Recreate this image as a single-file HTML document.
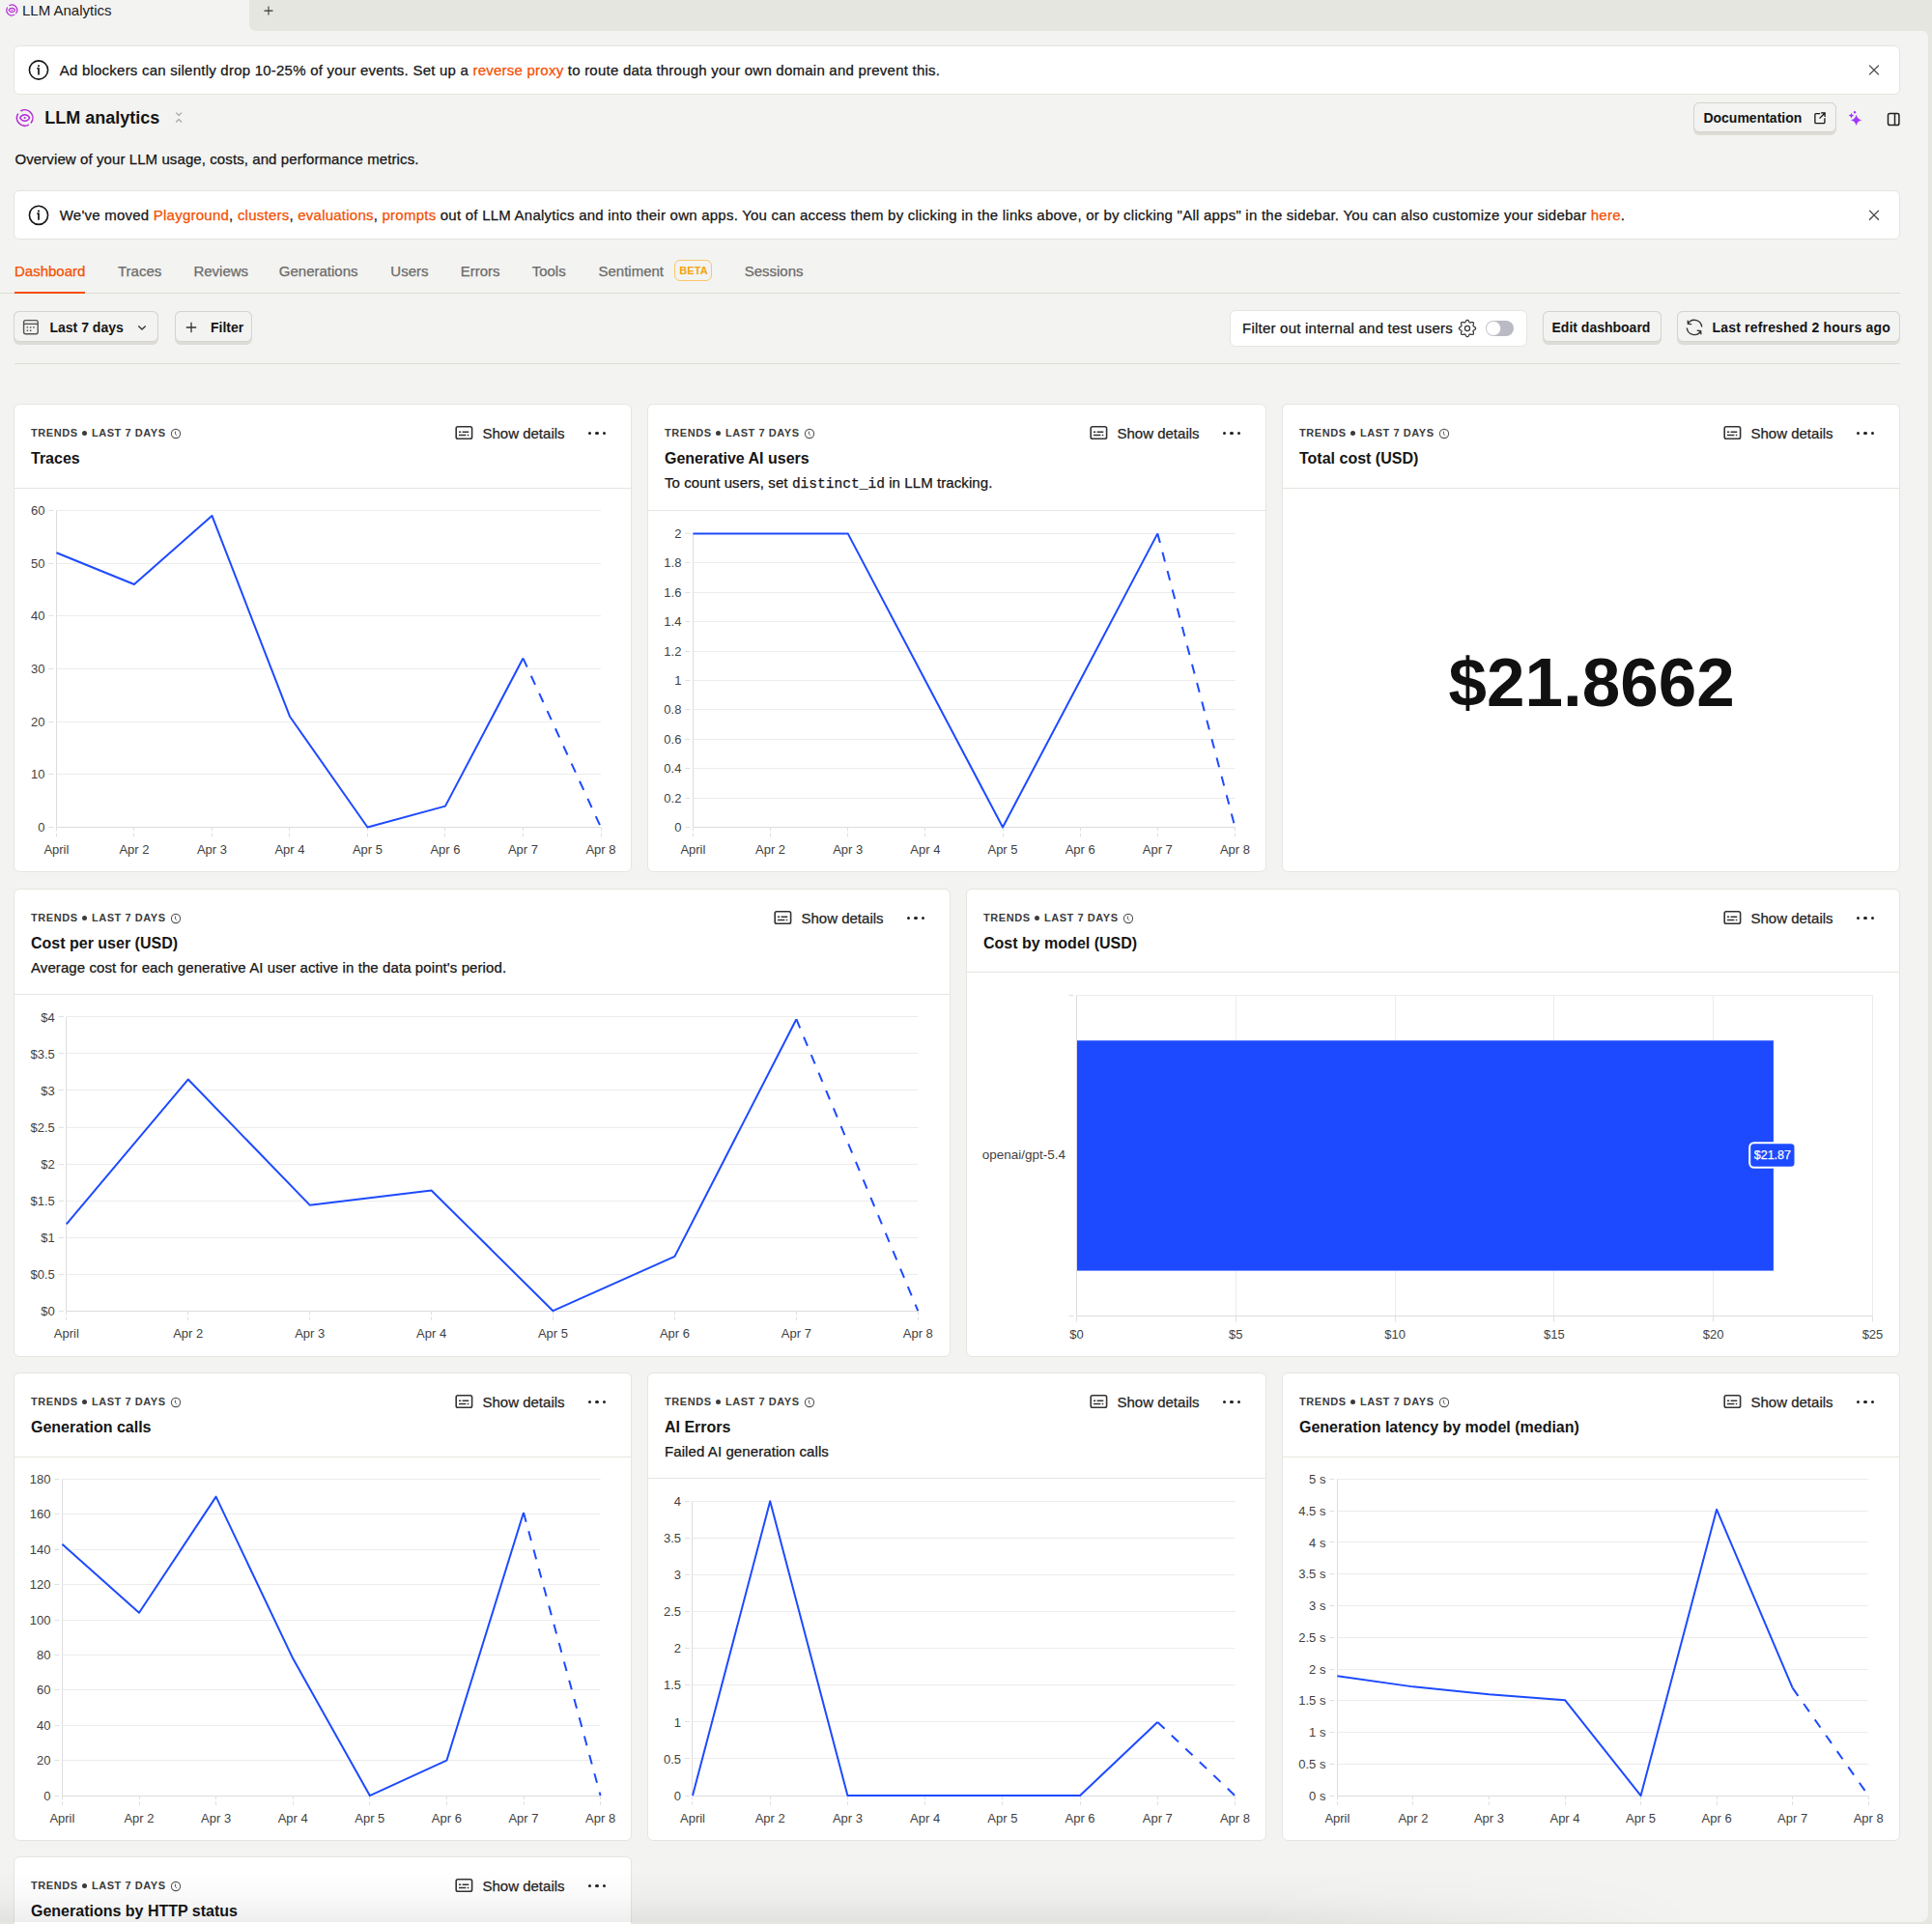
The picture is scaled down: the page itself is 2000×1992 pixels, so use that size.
<!DOCTYPE html>
<html><head><meta charset="utf-8"><title>LLM Analytics</title>
<style>
html,body{margin:0;padding:0;}
body{width:2000px;height:1992px;position:relative;overflow:hidden;background:#e5e6df;font-family:"Liberation Sans", sans-serif;-webkit-font-smoothing:antialiased;}
.t{position:absolute;white-space:nowrap;}
.m{-webkit-text-stroke:0.25px currentColor;}
svg{overflow:visible;}
</style></head><body>
<div style="position:absolute;left:0.00px;top:31.00px;width:1996.00px;height:1959.00px;background:#f3f3f1;border-top-right-radius:8px;border-bottom-right-radius:8px;"></div>
<div style="position:absolute;left:0.00px;top:0.00px;width:275.00px;height:32.00px;background:#f3f3f1;"></div>
<div style="position:absolute;left:257.50px;top:0.00px;width:1742.50px;height:31.50px;background:#e5e6df;border-bottom-left-radius:7px;"></div>
<svg style="position:absolute;left:0.00px;top:0.00px;" width="40" height="31" viewBox="0 0 40 31"><path d="M9.76 5.72 A5.41 5.41 0 0 1 16.62 13.76" fill="none" stroke="#b62ad9" stroke-width="1.2" stroke-linecap="round"/><path d="M7.52 7.96 A5.41 5.41 0 0 0 14.76 15.32" fill="none" stroke="#b62ad9" stroke-width="1.2" stroke-linecap="round"/><path d="M9.00 10.50 C10.48 7.67 14.12 7.67 15.60 10.50 C14.12 13.33 10.48 13.33 9.00 10.50 Z" fill="none" stroke="#b62ad9" stroke-width="1.2" stroke-linejoin="round"/><circle cx="12.30" cy="10.50" r="0.73" fill="#b62ad9"/></svg>
<div class="t " style="left:23.00px;top:3.30px;font-size:15px;line-height:15px;font-weight:400;color:#1a1a1a;">LLM Analytics</div>
<svg style="position:absolute;left:269.20px;top:1.70px;" width="18" height="18" viewBox="0 0 18 18"><path d="M9 4.6V13.6M4.5 9.1H13.5" stroke="#333" stroke-width="1.05"/></svg>
<div style="position:absolute;left:14.00px;top:47.00px;width:1953.00px;height:51.00px;background:#fff;border:1px solid #e5e6e0;border-radius:6px;box-sizing:border-box;"></div>
<svg style="position:absolute;left:20.00px;top:52.00px;" width="40" height="40" viewBox="0 0 40 40"><circle cx="20" cy="20.5" r="9.6" fill="none" stroke="#151515" stroke-width="1.6"/><circle cx="20" cy="16.3" r="1.05" fill="#151515"/><path d="M18.3 18.75H20V25.5" fill="none" stroke="#151515" stroke-width="1.7" stroke-linejoin="round"/></svg>
<div class="t m" style="left:61.70px;top:64.80px;font-size:15px;line-height:15px;font-weight:400;color:#151515;letter-spacing:0.23px;">Ad blockers can silently drop 10-25% of your events. Set up a <span style="color:#f54e00">reverse proxy</span> to route data through your own domain and prevent this.</div>
<svg style="position:absolute;left:1920.00px;top:52.00px;" width="40" height="40" viewBox="0 0 40 40"><path d="M15.1 15.6L24.9 25.4M24.9 15.6L15.1 25.4" stroke="#444" stroke-width="1.3"/></svg>
<svg style="position:absolute;left:10.00px;top:107.00px;" width="32" height="32" viewBox="0 0 32 32"><path d="M11.85 7.76 A8.20 8.20 0 0 1 22.25 19.93" fill="none" stroke="#b62ad9" stroke-width="1.5" stroke-linecap="round"/><path d="M8.46 11.15 A8.20 8.20 0 0 0 19.42 22.31" fill="none" stroke="#b62ad9" stroke-width="1.5" stroke-linecap="round"/><path d="M10.70 15.00 C12.95 10.71 18.45 10.71 20.70 15.00 C18.45 19.29 12.95 19.29 10.70 15.00 Z" fill="none" stroke="#b62ad9" stroke-width="1.5" stroke-linejoin="round"/><circle cx="15.70" cy="15.00" r="1.10" fill="#b62ad9"/></svg>
<div class="t " style="left:46.20px;top:113.26px;font-size:18px;line-height:18px;font-weight:700;color:#151515;">LLM analytics</div>
<svg style="position:absolute;left:176.00px;top:112.00px;" width="18" height="20" viewBox="0 0 18 20"><path d="M6.2 4.6L9.1 7.5L12 4.6M6.2 14.5L9.1 11.6L12 14.5" fill="none" stroke="#a3a3a3" stroke-width="1.1"/></svg>
<div class="t m" style="left:15.50px;top:156.60px;font-size:15px;line-height:15px;font-weight:400;color:#151515;letter-spacing:0.09px;">Overview of your LLM usage, costs, and performance metrics.</div>
<div style="position:absolute;left:1753.00px;top:105.50px;width:147.70px;height:34.50px;background:#dedcd6;border-radius:6px;"></div>
<div style="position:absolute;left:1753.00px;top:105.50px;width:147.70px;height:31.50px;background:#f3f3f1;border:1px solid #d5d4ce;border-radius:6px;box-sizing:border-box;"></div>
<div class="t " style="left:1763.40px;top:115.45px;font-size:14px;line-height:14px;font-weight:700;color:#151515;">Documentation</div>
<svg style="position:absolute;left:1874.00px;top:112.00px;" width="20" height="20" viewBox="0 0 20 20"><g transform="translate(10 10.5) scale(0.93) translate(-10 -10.5)"><path d="M10.2 5.2H5.5a1 1 0 0 0-1 1V15a1 1 0 0 0 1 1h8.8a1 1 0 0 0 1-1v-4.7" fill="none" stroke="#151515" stroke-width="1.4"/><path d="M9.5 10.6L15.2 4.8M11.2 4.5H15.5V8.8" fill="none" stroke="#151515" stroke-width="1.4"/></g></svg>
<svg style="position:absolute;left:1905.00px;top:108.00px;" width="32" height="32" viewBox="0 0 32 32"><path d="M16.60 10.40 Q17.54 15.36 22.50 16.30 Q17.54 17.24 16.60 22.20 Q15.66 17.24 10.70 16.30 Q15.66 15.36 16.60 10.40Z" fill="#a236ff"/><path d="M11.50 8.70 Q11.91 11.19 14.40 11.60 Q11.91 12.01 11.50 14.50 Q11.09 12.01 8.60 11.60 Q11.09 11.19 11.50 8.70Z" fill="#a236ff"/><circle cx="15" cy="8.3" r="1.2" fill="#a236ff"/></svg>
<svg style="position:absolute;left:1948.00px;top:112.00px;" width="24" height="24" viewBox="0 0 24 24"><rect x="6.5" y="5.6" width="11.4" height="12" rx="1.8" fill="none" stroke="#222" stroke-width="1.5"/><path d="M13.5 5.6V17.6" stroke="#222" stroke-width="1.5"/></svg>
<div style="position:absolute;left:14.00px;top:197.00px;width:1953.00px;height:51.00px;background:#fff;border:1px solid #e5e6e0;border-radius:6px;box-sizing:border-box;"></div>
<svg style="position:absolute;left:20.00px;top:202.00px;" width="40" height="40" viewBox="0 0 40 40"><circle cx="20" cy="20.8" r="9.6" fill="none" stroke="#151515" stroke-width="1.6"/><circle cx="20" cy="16.6" r="1.05" fill="#151515"/><path d="M18.3 19.05H20V25.8" fill="none" stroke="#151515" stroke-width="1.7" stroke-linejoin="round"/></svg>
<div class="t m" style="left:61.70px;top:214.60px;font-size:15px;line-height:15px;font-weight:400;color:#151515;letter-spacing:0.235px;">We've moved <span style="color:#f54e00">Playground</span>, <span style="color:#f54e00">clusters</span>, <span style="color:#f54e00">evaluations</span>, <span style="color:#f54e00">prompts</span> out of LLM Analytics and into their own apps. You can access them by clicking in the links above, or by clicking "All apps" in the sidebar. You can also customize your sidebar <span style="color:#f54e00">here</span>.</div>
<svg style="position:absolute;left:1920.00px;top:202.00px;" width="40" height="40" viewBox="0 0 40 40"><path d="M15.1 15.9L24.9 25.700000000000003M24.9 15.9L15.1 25.700000000000003" stroke="#444" stroke-width="1.3"/></svg>
<div style="position:absolute;left:0.00px;top:303.00px;width:1966.50px;height:1.00px;background:#dcdcd5;"></div>
<div class="t m" style="left:15.00px;top:273.30px;font-size:15px;line-height:15px;font-weight:400;color:#f54e00;">Dashboard</div>
<div class="t m" style="left:122.00px;top:273.30px;font-size:15px;line-height:15px;font-weight:400;color:#6b6b69;">Traces</div>
<div class="t m" style="left:200.40px;top:273.30px;font-size:15px;line-height:15px;font-weight:400;color:#6b6b69;">Reviews</div>
<div class="t m" style="left:288.80px;top:273.30px;font-size:15px;line-height:15px;font-weight:400;color:#6b6b69;">Generations</div>
<div class="t m" style="left:404.30px;top:273.30px;font-size:15px;line-height:15px;font-weight:400;color:#6b6b69;">Users</div>
<div class="t m" style="left:476.70px;top:273.30px;font-size:15px;line-height:15px;font-weight:400;color:#6b6b69;">Errors</div>
<div class="t m" style="left:550.70px;top:273.30px;font-size:15px;line-height:15px;font-weight:400;color:#6b6b69;">Tools</div>
<div class="t m" style="left:619.50px;top:273.30px;font-size:15px;line-height:15px;font-weight:400;color:#6b6b69;">Sentiment</div>
<div class="t m" style="left:770.70px;top:273.30px;font-size:15px;line-height:15px;font-weight:400;color:#6b6b69;">Sessions</div>
<div style="position:absolute;left:15.00px;top:301.50px;width:73.00px;height:2.50px;background:#f54e00;"></div>
<div style="position:absolute;left:698.00px;top:268.80px;width:39.00px;height:22.00px;border:1px solid #f7c76b;border-radius:6px;box-sizing:border-box;"></div>
<div class="t " style="left:218.00px;width:1000px;text-align:center;top:274.99px;font-size:11px;line-height:11px;font-weight:700;color:#f5a30a;letter-spacing:0.1px;">BETA</div>
<div style="position:absolute;left:14.30px;top:322.40px;width:150.20px;height:35.00px;background:#dedcd6;border-radius:6px;"></div>
<div style="position:absolute;left:14.30px;top:322.40px;width:150.20px;height:32.00px;background:#f3f3f1;border:1px solid #d5d4ce;border-radius:6px;box-sizing:border-box;"></div>
<svg style="position:absolute;left:22.00px;top:329.00px;" width="20" height="20" viewBox="0 0 20 20"><rect x="2.6" y="2.6" width="14.6" height="14.2" rx="2" fill="none" stroke="#555" stroke-width="1.4"/><path d="M2.6 6.4H17.2" stroke="#555" stroke-width="1.4"/><rect x="5.6" y="9.2" width="1.5" height="1.5" fill="#555"/><rect x="8.9" y="9.2" width="1.5" height="1.5" fill="#555"/><rect x="12.2" y="9.2" width="1.5" height="1.5" fill="#555"/><rect x="5.6" y="12.5" width="1.5" height="1.5" fill="#555"/><rect x="8.9" y="12.5" width="1.5" height="1.5" fill="#555"/></svg>
<div class="t " style="left:51.50px;top:332.05px;font-size:14px;line-height:14px;font-weight:700;color:#151515;">Last 7 days</div>
<svg style="position:absolute;left:137.00px;top:329.00px;" width="20" height="20" viewBox="0 0 20 20"><path d="M6.3 8.5L10 12L13.7 8.5" fill="none" stroke="#333" stroke-width="1.3"/></svg>
<div style="position:absolute;left:181.00px;top:322.40px;width:80.40px;height:35.00px;background:#dedcd6;border-radius:6px;"></div>
<div style="position:absolute;left:181.00px;top:322.40px;width:80.40px;height:32.00px;background:#f3f3f1;border:1px solid #d5d4ce;border-radius:6px;box-sizing:border-box;"></div>
<svg style="position:absolute;left:188.00px;top:328.50px;" width="20" height="20" viewBox="0 0 20 20"><path d="M10 4.8V15.2M4.8 10H15.2" stroke="#333" stroke-width="1.3"/></svg>
<div class="t " style="left:218.00px;top:332.05px;font-size:14px;line-height:14px;font-weight:700;color:#151515;">Filter</div>
<div style="position:absolute;left:1273.00px;top:321.00px;width:307.50px;height:38.30px;background:#fff;border:1px solid #e5e6e0;border-radius:6px;box-sizing:border-box;"></div>
<div class="t m" style="left:1286.00px;top:332.00px;font-size:15px;line-height:15px;font-weight:400;color:#151515;letter-spacing:0.23px;">Filter out internal and test users</div>
<svg style="position:absolute;left:1509.30px;top:330.10px;" width="20" height="20" viewBox="0 0 20 20"><path d="M18.65 10.00 L18.62 10.23 L18.55 10.45 L18.42 10.66 L18.26 10.87 L18.06 11.06 L17.83 11.24 L17.58 11.40 L17.33 11.56 L17.07 11.70 L16.83 11.83 L16.61 11.96 L16.42 12.09 L16.26 12.22 L16.14 12.36 L16.05 12.51 L16.00 12.67 L15.99 12.86 L16.01 13.06 L16.06 13.29 L16.13 13.54 L16.20 13.80 L16.28 14.08 L16.35 14.37 L16.41 14.66 L16.45 14.95 L16.45 15.22 L16.43 15.49 L16.36 15.73 L16.26 15.94 L16.12 16.12 L15.94 16.26 L15.73 16.36 L15.49 16.43 L15.22 16.45 L14.95 16.45 L14.66 16.41 L14.37 16.35 L14.08 16.28 L13.80 16.20 L13.54 16.13 L13.29 16.06 L13.06 16.01 L12.86 15.99 L12.67 16.00 L12.51 16.05 L12.36 16.14 L12.22 16.26 L12.09 16.42 L11.96 16.61 L11.83 16.83 L11.70 17.07 L11.56 17.33 L11.40 17.58 L11.24 17.83 L11.06 18.06 L10.87 18.26 L10.66 18.42 L10.45 18.55 L10.23 18.62 L10.00 18.65 L9.77 18.62 L9.55 18.55 L9.34 18.42 L9.13 18.26 L8.94 18.06 L8.76 17.83 L8.60 17.58 L8.44 17.33 L8.30 17.07 L8.17 16.83 L8.04 16.61 L7.91 16.42 L7.78 16.26 L7.64 16.14 L7.49 16.05 L7.33 16.00 L7.14 15.99 L6.94 16.01 L6.71 16.06 L6.46 16.13 L6.20 16.20 L5.92 16.28 L5.63 16.35 L5.34 16.41 L5.05 16.45 L4.78 16.45 L4.51 16.43 L4.27 16.36 L4.06 16.26 L3.88 16.12 L3.74 15.94 L3.64 15.73 L3.57 15.49 L3.55 15.22 L3.55 14.95 L3.59 14.66 L3.65 14.37 L3.72 14.08 L3.80 13.80 L3.87 13.54 L3.94 13.29 L3.99 13.06 L4.01 12.86 L4.00 12.67 L3.95 12.51 L3.86 12.36 L3.74 12.22 L3.58 12.09 L3.39 11.96 L3.17 11.83 L2.93 11.70 L2.67 11.56 L2.42 11.40 L2.17 11.24 L1.94 11.06 L1.74 10.87 L1.58 10.66 L1.45 10.45 L1.38 10.23 L1.35 10.00 L1.38 9.77 L1.45 9.55 L1.58 9.34 L1.74 9.13 L1.94 8.94 L2.17 8.76 L2.42 8.60 L2.67 8.44 L2.93 8.30 L3.17 8.17 L3.39 8.04 L3.58 7.91 L3.74 7.78 L3.86 7.64 L3.95 7.49 L4.00 7.33 L4.01 7.14 L3.99 6.94 L3.94 6.71 L3.87 6.46 L3.80 6.20 L3.72 5.92 L3.65 5.63 L3.59 5.34 L3.55 5.05 L3.55 4.78 L3.57 4.51 L3.64 4.27 L3.74 4.06 L3.88 3.88 L4.06 3.74 L4.27 3.64 L4.51 3.57 L4.78 3.55 L5.05 3.55 L5.34 3.59 L5.63 3.65 L5.92 3.72 L6.20 3.80 L6.46 3.87 L6.71 3.94 L6.94 3.99 L7.14 4.01 L7.33 4.00 L7.49 3.95 L7.64 3.86 L7.78 3.74 L7.91 3.58 L8.04 3.39 L8.17 3.17 L8.30 2.93 L8.44 2.67 L8.60 2.42 L8.76 2.17 L8.94 1.94 L9.13 1.74 L9.34 1.58 L9.55 1.45 L9.77 1.38 L10.00 1.35 L10.23 1.38 L10.45 1.45 L10.66 1.58 L10.87 1.74 L11.06 1.94 L11.24 2.17 L11.40 2.42 L11.56 2.67 L11.70 2.93 L11.83 3.17 L11.96 3.39 L12.09 3.58 L12.22 3.74 L12.36 3.86 L12.51 3.95 L12.67 4.00 L12.86 4.01 L13.06 3.99 L13.29 3.94 L13.54 3.87 L13.80 3.80 L14.08 3.72 L14.37 3.65 L14.66 3.59 L14.95 3.55 L15.22 3.55 L15.49 3.57 L15.73 3.64 L15.94 3.74 L16.12 3.88 L16.26 4.06 L16.36 4.27 L16.43 4.51 L16.45 4.78 L16.45 5.05 L16.41 5.34 L16.35 5.63 L16.28 5.92 L16.20 6.20 L16.13 6.46 L16.06 6.71 L16.01 6.94 L15.99 7.14 L16.00 7.33 L16.05 7.49 L16.14 7.64 L16.26 7.78 L16.42 7.91 L16.61 8.04 L16.83 8.17 L17.07 8.30 L17.33 8.44 L17.58 8.60 L17.83 8.76 L18.06 8.94 L18.26 9.13 L18.42 9.34 L18.55 9.55 L18.62 9.77Z" fill="none" stroke="#333" stroke-width="1.25" stroke-linejoin="round"/><circle cx="10" cy="10" r="2.55" fill="none" stroke="#333" stroke-width="1.25"/></svg>
<div style="position:absolute;left:1538.30px;top:332.20px;width:29.20px;height:15.80px;background:#babac4;border-radius:8px;"></div>
<div style="position:absolute;left:1539.20px;top:333.10px;width:14.00px;height:14.00px;background:#fff;border-radius:50%;box-shadow:0 0 0 0.6px #d6d6d6;"></div>
<div style="position:absolute;left:1597.00px;top:322.40px;width:122.60px;height:35.00px;background:#dedcd6;border-radius:6px;"></div>
<div style="position:absolute;left:1597.00px;top:322.40px;width:122.60px;height:32.00px;background:#f3f3f1;border:1px solid #d5d4ce;border-radius:6px;box-sizing:border-box;"></div>
<div class="t " style="left:1606.50px;top:332.05px;font-size:14px;line-height:14px;font-weight:700;color:#151515;">Edit dashboard</div>
<div style="position:absolute;left:1736.00px;top:322.40px;width:231.00px;height:35.00px;background:#dedcd6;border-radius:6px;"></div>
<div style="position:absolute;left:1736.00px;top:322.40px;width:231.00px;height:32.00px;background:#f3f3f1;border:1px solid #d5d4ce;border-radius:6px;box-sizing:border-box;"></div>
<svg style="position:absolute;left:1743.90px;top:329.10px;" width="20" height="20" viewBox="0 0 20 20"><path d="M2.3 10.5A7.7 7.7 0 0 0 16.7 13.6M17.7 9.5A7.7 7.7 0 0 0 3.6 5.8" fill="none" stroke="#333" stroke-width="1.4"/><path d="M3.2 2.7L3.4 6.4L7.2 6.6M16.9 17.3L16.6 13.6L12.8 13.3" fill="none" stroke="#333" stroke-width="1.4" stroke-linejoin="round"/></svg>
<div class="t " style="left:1772.50px;top:332.05px;font-size:14px;line-height:14px;font-weight:700;color:#151515;letter-spacing:0.18px;">Last refreshed 2 hours ago</div>
<div style="position:absolute;left:15.00px;top:375.80px;width:1951.50px;height:1.00px;background:#dcdcd5;"></div>
<div style="position:absolute;left:14.00px;top:418.00px;width:640.00px;height:485.00px;background:#fff;border:1px solid #e5e6e0;border-radius:6px;box-sizing:border-box;"></div>
<div class="t " style="left:32.00px;top:443.19px;font-size:11px;line-height:11px;font-weight:700;color:#3b3b3b;letter-spacing:0.57px;">TRENDS <span style="display:inline-block;width:5px;height:5px;border-radius:50%;background:#3b3b3b;vertical-align:1px;margin:0 1px"></span> LAST 7 DAYS</div>
<svg style="position:absolute;left:176.00px;top:442.50px;" width="12" height="12" viewBox="0 0 12 12"><circle cx="6" cy="6" r="4.6" fill="none" stroke="#555" stroke-width="1.1"/><path d="M5.4 3.6V6.2L7 7.8" fill="none" stroke="#555" stroke-width="1"/></svg>
<div class="t " style="left:32.00px;top:466.86px;font-size:16px;line-height:16px;font-weight:700;color:#151515;">Traces</div>
<svg style="position:absolute;left:471.00px;top:440.00px;" width="20" height="16" viewBox="0 0 20 16"><rect x="1.2" y="1.8" width="16.4" height="12.4" rx="1.8" fill="none" stroke="#333" stroke-width="1.6"/><path d="M4 7.2H6.2M7.6 7.2H14.3M4 10.5H11.4M12.8 10.5H14.3" stroke="#333" stroke-width="1.4"/></svg>
<div class="t m" style="left:499.50px;top:441.30px;font-size:15px;line-height:15px;font-weight:400;color:#1f1f1f;">Show details</div>
<div style="position:absolute;left:609.10px;top:446.60px;width:3.20px;height:3.20px;background:#222;border-radius:50%;"></div>
<div style="position:absolute;left:616.40px;top:446.60px;width:3.20px;height:3.20px;background:#222;border-radius:50%;"></div>
<div style="position:absolute;left:623.70px;top:446.60px;width:3.20px;height:3.20px;background:#222;border-radius:50%;"></div>
<div style="position:absolute;left:15.00px;top:505.00px;width:638.00px;height:1.00px;background:#e5e6e0;"></div>
<div class="t " style="right:1953.60px;top:850.10px;font-size:13px;line-height:13px;font-weight:400;color:#3f3f3f;">0</div>
<div class="t " style="right:1953.60px;top:795.43px;font-size:13px;line-height:13px;font-weight:400;color:#3f3f3f;">10</div>
<div class="t " style="right:1953.60px;top:740.76px;font-size:13px;line-height:13px;font-weight:400;color:#3f3f3f;">20</div>
<div class="t " style="right:1953.60px;top:686.10px;font-size:13px;line-height:13px;font-weight:400;color:#3f3f3f;">30</div>
<div class="t " style="right:1953.60px;top:631.43px;font-size:13px;line-height:13px;font-weight:400;color:#3f3f3f;">40</div>
<div class="t " style="right:1953.60px;top:576.76px;font-size:13px;line-height:13px;font-weight:400;color:#3f3f3f;">50</div>
<div class="t " style="right:1953.60px;top:522.10px;font-size:13px;line-height:13px;font-weight:400;color:#3f3f3f;">60</div>
<div class="t " style="left:-441.60px;width:1000px;text-align:center;top:873.00px;font-size:13px;line-height:13px;font-weight:400;color:#3f3f3f;">April</div>
<div class="t " style="left:-361.09px;width:1000px;text-align:center;top:873.00px;font-size:13px;line-height:13px;font-weight:400;color:#3f3f3f;">Apr 2</div>
<div class="t " style="left:-280.57px;width:1000px;text-align:center;top:873.00px;font-size:13px;line-height:13px;font-weight:400;color:#3f3f3f;">Apr 3</div>
<div class="t " style="left:-200.06px;width:1000px;text-align:center;top:873.00px;font-size:13px;line-height:13px;font-weight:400;color:#3f3f3f;">Apr 4</div>
<div class="t " style="left:-119.54px;width:1000px;text-align:center;top:873.00px;font-size:13px;line-height:13px;font-weight:400;color:#3f3f3f;">Apr 5</div>
<div class="t " style="left:-39.03px;width:1000px;text-align:center;top:873.00px;font-size:13px;line-height:13px;font-weight:400;color:#3f3f3f;">Apr 6</div>
<div class="t " style="left:41.49px;width:1000px;text-align:center;top:873.00px;font-size:13px;line-height:13px;font-weight:400;color:#3f3f3f;">Apr 7</div>
<div class="t " style="left:122.00px;width:1000px;text-align:center;top:873.00px;font-size:13px;line-height:13px;font-weight:400;color:#3f3f3f;">Apr 8</div>
<svg style="position:absolute;left:14.00px;top:418.00px;" width="640" height="485" viewBox="0 0 640 485"><path d="M44.40 438.50H608.00" stroke="#dcdce0" stroke-width="1"/><path d="M36.40 438.50H44.40" stroke="#e0e0e4" stroke-width="1" stroke-dasharray="5 3"/><path d="M44.40 383.50H608.00" stroke="#ececec" stroke-width="1"/><path d="M36.40 383.50H44.40" stroke="#e0e0e4" stroke-width="1" stroke-dasharray="5 3"/><path d="M44.40 329.50H608.00" stroke="#ececec" stroke-width="1"/><path d="M36.40 329.50H44.40" stroke="#e0e0e4" stroke-width="1" stroke-dasharray="5 3"/><path d="M44.40 274.50H608.00" stroke="#ececec" stroke-width="1"/><path d="M36.40 274.50H44.40" stroke="#e0e0e4" stroke-width="1" stroke-dasharray="5 3"/><path d="M44.40 219.50H608.00" stroke="#ececec" stroke-width="1"/><path d="M36.40 219.50H44.40" stroke="#e0e0e4" stroke-width="1" stroke-dasharray="5 3"/><path d="M44.40 165.50H608.00" stroke="#ececec" stroke-width="1"/><path d="M36.40 165.50H44.40" stroke="#e0e0e4" stroke-width="1" stroke-dasharray="5 3"/><path d="M44.40 110.50H608.00" stroke="#ececec" stroke-width="1"/><path d="M36.40 110.50H44.40" stroke="#e0e0e4" stroke-width="1" stroke-dasharray="5 3"/><path d="M44.50 110.50V438.50" stroke="#dcdce0" stroke-width="1"/><path d="M44.50 438.50V448.50" stroke="#e0e0e4" stroke-width="1" stroke-dasharray="4 2"/><path d="M124.50 438.50V448.50" stroke="#e0e0e4" stroke-width="1" stroke-dasharray="4 2"/><path d="M205.50 438.50V448.50" stroke="#e0e0e4" stroke-width="1" stroke-dasharray="4 2"/><path d="M285.50 438.50V448.50" stroke="#e0e0e4" stroke-width="1" stroke-dasharray="4 2"/><path d="M366.50 438.50V448.50" stroke="#e0e0e4" stroke-width="1" stroke-dasharray="4 2"/><path d="M446.50 438.50V448.50" stroke="#e0e0e4" stroke-width="1" stroke-dasharray="4 2"/><path d="M527.50 438.50V448.50" stroke="#e0e0e4" stroke-width="1" stroke-dasharray="4 2"/><path d="M608.50 438.50V448.50" stroke="#e0e0e4" stroke-width="1" stroke-dasharray="4 2"/><path d="M44.40 154.23 L124.91 187.03 L205.43 115.97 L285.94 323.70 L366.46 438.50 L446.97 416.63 L527.49 263.57" fill="none" stroke="#1d4aff" stroke-width="2" stroke-linejoin="round"/><path d="M527.49 263.57 L608.00 438.50" fill="none" stroke="#1d4aff" stroke-width="2" stroke-dasharray="10 10"/></svg>
<div style="position:absolute;left:670.00px;top:418.00px;width:641.00px;height:485.00px;background:#fff;border:1px solid #e5e6e0;border-radius:6px;box-sizing:border-box;"></div>
<div class="t " style="left:688.00px;top:443.19px;font-size:11px;line-height:11px;font-weight:700;color:#3b3b3b;letter-spacing:0.57px;">TRENDS <span style="display:inline-block;width:5px;height:5px;border-radius:50%;background:#3b3b3b;vertical-align:1px;margin:0 1px"></span> LAST 7 DAYS</div>
<svg style="position:absolute;left:832.00px;top:442.50px;" width="12" height="12" viewBox="0 0 12 12"><circle cx="6" cy="6" r="4.6" fill="none" stroke="#555" stroke-width="1.1"/><path d="M5.4 3.6V6.2L7 7.8" fill="none" stroke="#555" stroke-width="1"/></svg>
<div class="t " style="left:688.00px;top:466.86px;font-size:16px;line-height:16px;font-weight:700;color:#151515;">Generative AI users</div>
<div class="t m" style="left:688.00px;top:492.30px;font-size:15px;line-height:15px;font-weight:400;color:#151515;letter-spacing:0.09px;">To count users, set <span style="font-family:'Liberation Mono',monospace;font-size:14.55px;letter-spacing:0">distinct_id</span> in LLM tracking.</div>
<svg style="position:absolute;left:1128.00px;top:440.00px;" width="20" height="16" viewBox="0 0 20 16"><rect x="1.2" y="1.8" width="16.4" height="12.4" rx="1.8" fill="none" stroke="#333" stroke-width="1.6"/><path d="M4 7.2H6.2M7.6 7.2H14.3M4 10.5H11.4M12.8 10.5H14.3" stroke="#333" stroke-width="1.4"/></svg>
<div class="t m" style="left:1156.50px;top:441.30px;font-size:15px;line-height:15px;font-weight:400;color:#1f1f1f;">Show details</div>
<div style="position:absolute;left:1266.10px;top:446.60px;width:3.20px;height:3.20px;background:#222;border-radius:50%;"></div>
<div style="position:absolute;left:1273.40px;top:446.60px;width:3.20px;height:3.20px;background:#222;border-radius:50%;"></div>
<div style="position:absolute;left:1280.70px;top:446.60px;width:3.20px;height:3.20px;background:#222;border-radius:50%;"></div>
<div style="position:absolute;left:671.00px;top:528.00px;width:639.00px;height:1.00px;background:#e5e6e0;"></div>
<div class="t " style="right:1294.60px;top:850.10px;font-size:13px;line-height:13px;font-weight:400;color:#3f3f3f;">0</div>
<div class="t " style="right:1294.60px;top:819.69px;font-size:13px;line-height:13px;font-weight:400;color:#3f3f3f;">0.2</div>
<div class="t " style="right:1294.60px;top:789.28px;font-size:13px;line-height:13px;font-weight:400;color:#3f3f3f;">0.4</div>
<div class="t " style="right:1294.60px;top:758.87px;font-size:13px;line-height:13px;font-weight:400;color:#3f3f3f;">0.6</div>
<div class="t " style="right:1294.60px;top:728.46px;font-size:13px;line-height:13px;font-weight:400;color:#3f3f3f;">0.8</div>
<div class="t " style="right:1294.60px;top:698.05px;font-size:13px;line-height:13px;font-weight:400;color:#3f3f3f;">1</div>
<div class="t " style="right:1294.60px;top:667.64px;font-size:13px;line-height:13px;font-weight:400;color:#3f3f3f;">1.2</div>
<div class="t " style="right:1294.60px;top:637.23px;font-size:13px;line-height:13px;font-weight:400;color:#3f3f3f;">1.4</div>
<div class="t " style="right:1294.60px;top:606.82px;font-size:13px;line-height:13px;font-weight:400;color:#3f3f3f;">1.6</div>
<div class="t " style="right:1294.60px;top:576.41px;font-size:13px;line-height:13px;font-weight:400;color:#3f3f3f;">1.8</div>
<div class="t " style="right:1294.60px;top:546.00px;font-size:13px;line-height:13px;font-weight:400;color:#3f3f3f;">2</div>
<div class="t " style="left:217.40px;width:1000px;text-align:center;top:873.00px;font-size:13px;line-height:13px;font-weight:400;color:#3f3f3f;">April</div>
<div class="t " style="left:297.56px;width:1000px;text-align:center;top:873.00px;font-size:13px;line-height:13px;font-weight:400;color:#3f3f3f;">Apr 2</div>
<div class="t " style="left:377.71px;width:1000px;text-align:center;top:873.00px;font-size:13px;line-height:13px;font-weight:400;color:#3f3f3f;">Apr 3</div>
<div class="t " style="left:457.87px;width:1000px;text-align:center;top:873.00px;font-size:13px;line-height:13px;font-weight:400;color:#3f3f3f;">Apr 4</div>
<div class="t " style="left:538.03px;width:1000px;text-align:center;top:873.00px;font-size:13px;line-height:13px;font-weight:400;color:#3f3f3f;">Apr 5</div>
<div class="t " style="left:618.19px;width:1000px;text-align:center;top:873.00px;font-size:13px;line-height:13px;font-weight:400;color:#3f3f3f;">Apr 6</div>
<div class="t " style="left:698.34px;width:1000px;text-align:center;top:873.00px;font-size:13px;line-height:13px;font-weight:400;color:#3f3f3f;">Apr 7</div>
<div class="t " style="left:778.50px;width:1000px;text-align:center;top:873.00px;font-size:13px;line-height:13px;font-weight:400;color:#3f3f3f;">Apr 8</div>
<svg style="position:absolute;left:670.00px;top:418.00px;" width="641" height="485" viewBox="0 0 641 485"><path d="M47.40 438.50H608.50" stroke="#dcdce0" stroke-width="1"/><path d="M39.40 438.50H47.40" stroke="#e0e0e4" stroke-width="1" stroke-dasharray="5 3"/><path d="M47.40 408.50H608.50" stroke="#ececec" stroke-width="1"/><path d="M39.40 408.50H47.40" stroke="#e0e0e4" stroke-width="1" stroke-dasharray="5 3"/><path d="M47.40 377.50H608.50" stroke="#ececec" stroke-width="1"/><path d="M39.40 377.50H47.40" stroke="#e0e0e4" stroke-width="1" stroke-dasharray="5 3"/><path d="M47.40 347.50H608.50" stroke="#ececec" stroke-width="1"/><path d="M39.40 347.50H47.40" stroke="#e0e0e4" stroke-width="1" stroke-dasharray="5 3"/><path d="M47.40 316.50H608.50" stroke="#ececec" stroke-width="1"/><path d="M39.40 316.50H47.40" stroke="#e0e0e4" stroke-width="1" stroke-dasharray="5 3"/><path d="M47.40 286.50H608.50" stroke="#ececec" stroke-width="1"/><path d="M39.40 286.50H47.40" stroke="#e0e0e4" stroke-width="1" stroke-dasharray="5 3"/><path d="M47.40 256.50H608.50" stroke="#ececec" stroke-width="1"/><path d="M39.40 256.50H47.40" stroke="#e0e0e4" stroke-width="1" stroke-dasharray="5 3"/><path d="M47.40 225.50H608.50" stroke="#ececec" stroke-width="1"/><path d="M39.40 225.50H47.40" stroke="#e0e0e4" stroke-width="1" stroke-dasharray="5 3"/><path d="M47.40 195.50H608.50" stroke="#ececec" stroke-width="1"/><path d="M39.40 195.50H47.40" stroke="#e0e0e4" stroke-width="1" stroke-dasharray="5 3"/><path d="M47.40 164.50H608.50" stroke="#ececec" stroke-width="1"/><path d="M39.40 164.50H47.40" stroke="#e0e0e4" stroke-width="1" stroke-dasharray="5 3"/><path d="M47.40 134.50H608.50" stroke="#ececec" stroke-width="1"/><path d="M39.40 134.50H47.40" stroke="#e0e0e4" stroke-width="1" stroke-dasharray="5 3"/><path d="M47.50 134.40V438.50" stroke="#dcdce0" stroke-width="1"/><path d="M47.50 438.50V448.50" stroke="#e0e0e4" stroke-width="1" stroke-dasharray="4 2"/><path d="M127.50 438.50V448.50" stroke="#e0e0e4" stroke-width="1" stroke-dasharray="4 2"/><path d="M207.50 438.50V448.50" stroke="#e0e0e4" stroke-width="1" stroke-dasharray="4 2"/><path d="M287.50 438.50V448.50" stroke="#e0e0e4" stroke-width="1" stroke-dasharray="4 2"/><path d="M368.50 438.50V448.50" stroke="#e0e0e4" stroke-width="1" stroke-dasharray="4 2"/><path d="M448.50 438.50V448.50" stroke="#e0e0e4" stroke-width="1" stroke-dasharray="4 2"/><path d="M528.50 438.50V448.50" stroke="#e0e0e4" stroke-width="1" stroke-dasharray="4 2"/><path d="M608.50 438.50V448.50" stroke="#e0e0e4" stroke-width="1" stroke-dasharray="4 2"/><path d="M47.40 134.40 L127.56 134.40 L207.71 134.40 L287.87 286.45 L368.03 438.50 L448.19 286.45 L528.34 134.40" fill="none" stroke="#1d4aff" stroke-width="2" stroke-linejoin="round"/><path d="M528.34 134.40 L608.50 438.50" fill="none" stroke="#1d4aff" stroke-width="2" stroke-dasharray="10 10"/></svg>
<div style="position:absolute;left:1327.00px;top:418.00px;width:640.00px;height:485.00px;background:#fff;border:1px solid #e5e6e0;border-radius:6px;box-sizing:border-box;"></div>
<div class="t " style="left:1345.00px;top:443.19px;font-size:11px;line-height:11px;font-weight:700;color:#3b3b3b;letter-spacing:0.57px;">TRENDS <span style="display:inline-block;width:5px;height:5px;border-radius:50%;background:#3b3b3b;vertical-align:1px;margin:0 1px"></span> LAST 7 DAYS</div>
<svg style="position:absolute;left:1489.00px;top:442.50px;" width="12" height="12" viewBox="0 0 12 12"><circle cx="6" cy="6" r="4.6" fill="none" stroke="#555" stroke-width="1.1"/><path d="M5.4 3.6V6.2L7 7.8" fill="none" stroke="#555" stroke-width="1"/></svg>
<div class="t " style="left:1345.00px;top:466.86px;font-size:16px;line-height:16px;font-weight:700;color:#151515;">Total cost (USD)</div>
<svg style="position:absolute;left:1784.00px;top:440.00px;" width="20" height="16" viewBox="0 0 20 16"><rect x="1.2" y="1.8" width="16.4" height="12.4" rx="1.8" fill="none" stroke="#333" stroke-width="1.6"/><path d="M4 7.2H6.2M7.6 7.2H14.3M4 10.5H11.4M12.8 10.5H14.3" stroke="#333" stroke-width="1.4"/></svg>
<div class="t m" style="left:1812.50px;top:441.30px;font-size:15px;line-height:15px;font-weight:400;color:#1f1f1f;">Show details</div>
<div style="position:absolute;left:1922.10px;top:446.60px;width:3.20px;height:3.20px;background:#222;border-radius:50%;"></div>
<div style="position:absolute;left:1929.40px;top:446.60px;width:3.20px;height:3.20px;background:#222;border-radius:50%;"></div>
<div style="position:absolute;left:1936.70px;top:446.60px;width:3.20px;height:3.20px;background:#222;border-radius:50%;"></div>
<div style="position:absolute;left:1328.00px;top:505.00px;width:638.00px;height:1.00px;background:#e5e6e0;"></div>
<div class="t " style="left:1147.60px;width:1000px;text-align:center;top:670.90px;font-size:71px;line-height:71px;font-weight:700;color:#111;">$21.8662</div>
<div style="position:absolute;left:14.00px;top:920.00px;width:970.00px;height:485.00px;background:#fff;border:1px solid #e5e6e0;border-radius:6px;box-sizing:border-box;"></div>
<div class="t " style="left:32.00px;top:945.19px;font-size:11px;line-height:11px;font-weight:700;color:#3b3b3b;letter-spacing:0.57px;">TRENDS <span style="display:inline-block;width:5px;height:5px;border-radius:50%;background:#3b3b3b;vertical-align:1px;margin:0 1px"></span> LAST 7 DAYS</div>
<svg style="position:absolute;left:176.00px;top:944.50px;" width="12" height="12" viewBox="0 0 12 12"><circle cx="6" cy="6" r="4.6" fill="none" stroke="#555" stroke-width="1.1"/><path d="M5.4 3.6V6.2L7 7.8" fill="none" stroke="#555" stroke-width="1"/></svg>
<div class="t " style="left:32.00px;top:968.86px;font-size:16px;line-height:16px;font-weight:700;color:#151515;">Cost per user (USD)</div>
<div class="t m" style="left:32.00px;top:994.30px;font-size:15px;line-height:15px;font-weight:400;color:#151515;letter-spacing:0.09px;">Average cost for each generative AI user active in the data point's period.</div>
<svg style="position:absolute;left:801.00px;top:942.00px;" width="20" height="16" viewBox="0 0 20 16"><rect x="1.2" y="1.8" width="16.4" height="12.4" rx="1.8" fill="none" stroke="#333" stroke-width="1.6"/><path d="M4 7.2H6.2M7.6 7.2H14.3M4 10.5H11.4M12.8 10.5H14.3" stroke="#333" stroke-width="1.4"/></svg>
<div class="t m" style="left:829.50px;top:943.30px;font-size:15px;line-height:15px;font-weight:400;color:#1f1f1f;">Show details</div>
<div style="position:absolute;left:939.10px;top:948.60px;width:3.20px;height:3.20px;background:#222;border-radius:50%;"></div>
<div style="position:absolute;left:946.40px;top:948.60px;width:3.20px;height:3.20px;background:#222;border-radius:50%;"></div>
<div style="position:absolute;left:953.70px;top:948.60px;width:3.20px;height:3.20px;background:#222;border-radius:50%;"></div>
<div style="position:absolute;left:15.00px;top:1029.00px;width:968.00px;height:1.00px;background:#e5e6e0;"></div>
<div class="t " style="right:1943.20px;top:1350.80px;font-size:13px;line-height:13px;font-weight:400;color:#3f3f3f;">$0</div>
<div class="t " style="right:1943.20px;top:1312.76px;font-size:13px;line-height:13px;font-weight:400;color:#3f3f3f;">$0.5</div>
<div class="t " style="right:1943.20px;top:1274.72px;font-size:13px;line-height:13px;font-weight:400;color:#3f3f3f;">$1</div>
<div class="t " style="right:1943.20px;top:1236.68px;font-size:13px;line-height:13px;font-weight:400;color:#3f3f3f;">$1.5</div>
<div class="t " style="right:1943.20px;top:1198.65px;font-size:13px;line-height:13px;font-weight:400;color:#3f3f3f;">$2</div>
<div class="t " style="right:1943.20px;top:1160.61px;font-size:13px;line-height:13px;font-weight:400;color:#3f3f3f;">$2.5</div>
<div class="t " style="right:1943.20px;top:1122.57px;font-size:13px;line-height:13px;font-weight:400;color:#3f3f3f;">$3</div>
<div class="t " style="right:1943.20px;top:1084.53px;font-size:13px;line-height:13px;font-weight:400;color:#3f3f3f;">$3.5</div>
<div class="t " style="right:1943.20px;top:1046.50px;font-size:13px;line-height:13px;font-weight:400;color:#3f3f3f;">$4</div>
<div class="t " style="left:-431.20px;width:1000px;text-align:center;top:1373.70px;font-size:13px;line-height:13px;font-weight:400;color:#3f3f3f;">April</div>
<div class="t " style="left:-305.27px;width:1000px;text-align:center;top:1373.70px;font-size:13px;line-height:13px;font-weight:400;color:#3f3f3f;">Apr 2</div>
<div class="t " style="left:-179.34px;width:1000px;text-align:center;top:1373.70px;font-size:13px;line-height:13px;font-weight:400;color:#3f3f3f;">Apr 3</div>
<div class="t " style="left:-53.41px;width:1000px;text-align:center;top:1373.70px;font-size:13px;line-height:13px;font-weight:400;color:#3f3f3f;">Apr 4</div>
<div class="t " style="left:72.51px;width:1000px;text-align:center;top:1373.70px;font-size:13px;line-height:13px;font-weight:400;color:#3f3f3f;">Apr 5</div>
<div class="t " style="left:198.44px;width:1000px;text-align:center;top:1373.70px;font-size:13px;line-height:13px;font-weight:400;color:#3f3f3f;">Apr 6</div>
<div class="t " style="left:324.37px;width:1000px;text-align:center;top:1373.70px;font-size:13px;line-height:13px;font-weight:400;color:#3f3f3f;">Apr 7</div>
<div class="t " style="left:450.30px;width:1000px;text-align:center;top:1373.70px;font-size:13px;line-height:13px;font-weight:400;color:#3f3f3f;">Apr 8</div>
<svg style="position:absolute;left:14.00px;top:920.00px;" width="970" height="485" viewBox="0 0 970 485"><path d="M54.80 437.50H936.30" stroke="#dcdce0" stroke-width="1"/><path d="M46.80 437.50H54.80" stroke="#e0e0e4" stroke-width="1" stroke-dasharray="5 3"/><path d="M54.80 399.50H936.30" stroke="#ececec" stroke-width="1"/><path d="M46.80 399.50H54.80" stroke="#e0e0e4" stroke-width="1" stroke-dasharray="5 3"/><path d="M54.80 361.50H936.30" stroke="#ececec" stroke-width="1"/><path d="M46.80 361.50H54.80" stroke="#e0e0e4" stroke-width="1" stroke-dasharray="5 3"/><path d="M54.80 323.50H936.30" stroke="#ececec" stroke-width="1"/><path d="M46.80 323.50H54.80" stroke="#e0e0e4" stroke-width="1" stroke-dasharray="5 3"/><path d="M54.80 285.50H936.30" stroke="#ececec" stroke-width="1"/><path d="M46.80 285.50H54.80" stroke="#e0e0e4" stroke-width="1" stroke-dasharray="5 3"/><path d="M54.80 247.50H936.30" stroke="#ececec" stroke-width="1"/><path d="M46.80 247.50H54.80" stroke="#e0e0e4" stroke-width="1" stroke-dasharray="5 3"/><path d="M54.80 208.50H936.30" stroke="#ececec" stroke-width="1"/><path d="M46.80 208.50H54.80" stroke="#e0e0e4" stroke-width="1" stroke-dasharray="5 3"/><path d="M54.80 170.50H936.30" stroke="#ececec" stroke-width="1"/><path d="M46.80 170.50H54.80" stroke="#e0e0e4" stroke-width="1" stroke-dasharray="5 3"/><path d="M54.80 132.50H936.30" stroke="#ececec" stroke-width="1"/><path d="M46.80 132.50H54.80" stroke="#e0e0e4" stroke-width="1" stroke-dasharray="5 3"/><path d="M54.50 132.90V437.20" stroke="#dcdce0" stroke-width="1"/><path d="M54.50 437.20V447.20" stroke="#e0e0e4" stroke-width="1" stroke-dasharray="4 2"/><path d="M180.50 437.20V447.20" stroke="#e0e0e4" stroke-width="1" stroke-dasharray="4 2"/><path d="M306.50 437.20V447.20" stroke="#e0e0e4" stroke-width="1" stroke-dasharray="4 2"/><path d="M432.50 437.20V447.20" stroke="#e0e0e4" stroke-width="1" stroke-dasharray="4 2"/><path d="M558.50 437.20V447.20" stroke="#e0e0e4" stroke-width="1" stroke-dasharray="4 2"/><path d="M684.50 437.20V447.20" stroke="#e0e0e4" stroke-width="1" stroke-dasharray="4 2"/><path d="M810.50 437.20V447.20" stroke="#e0e0e4" stroke-width="1" stroke-dasharray="4 2"/><path d="M936.50 437.20V447.20" stroke="#e0e0e4" stroke-width="1" stroke-dasharray="4 2"/><path d="M54.80 347.43 L180.73 197.56 L306.66 327.65 L432.59 312.44 L558.51 437.20 L684.44 380.90 L810.37 135.18" fill="none" stroke="#1d4aff" stroke-width="2" stroke-linejoin="round"/><path d="M810.37 135.18 L936.30 437.20" fill="none" stroke="#1d4aff" stroke-width="2" stroke-dasharray="10 10"/></svg>
<div style="position:absolute;left:1000.00px;top:920.00px;width:967.00px;height:485.00px;background:#fff;border:1px solid #e5e6e0;border-radius:6px;box-sizing:border-box;"></div>
<div class="t " style="left:1018.00px;top:945.19px;font-size:11px;line-height:11px;font-weight:700;color:#3b3b3b;letter-spacing:0.57px;">TRENDS <span style="display:inline-block;width:5px;height:5px;border-radius:50%;background:#3b3b3b;vertical-align:1px;margin:0 1px"></span> LAST 7 DAYS</div>
<svg style="position:absolute;left:1162.00px;top:944.50px;" width="12" height="12" viewBox="0 0 12 12"><circle cx="6" cy="6" r="4.6" fill="none" stroke="#555" stroke-width="1.1"/><path d="M5.4 3.6V6.2L7 7.8" fill="none" stroke="#555" stroke-width="1"/></svg>
<div class="t " style="left:1018.00px;top:968.86px;font-size:16px;line-height:16px;font-weight:700;color:#151515;">Cost by model (USD)</div>
<svg style="position:absolute;left:1784.00px;top:942.00px;" width="20" height="16" viewBox="0 0 20 16"><rect x="1.2" y="1.8" width="16.4" height="12.4" rx="1.8" fill="none" stroke="#333" stroke-width="1.6"/><path d="M4 7.2H6.2M7.6 7.2H14.3M4 10.5H11.4M12.8 10.5H14.3" stroke="#333" stroke-width="1.4"/></svg>
<div class="t m" style="left:1812.50px;top:943.30px;font-size:15px;line-height:15px;font-weight:400;color:#1f1f1f;">Show details</div>
<div style="position:absolute;left:1922.10px;top:948.60px;width:3.20px;height:3.20px;background:#222;border-radius:50%;"></div>
<div style="position:absolute;left:1929.40px;top:948.60px;width:3.20px;height:3.20px;background:#222;border-radius:50%;"></div>
<div style="position:absolute;left:1936.70px;top:948.60px;width:3.20px;height:3.20px;background:#222;border-radius:50%;"></div>
<div style="position:absolute;left:1001.00px;top:1006.00px;width:965.00px;height:1.00px;background:#e5e6e0;"></div>
<div class="t " style="left:614.50px;width:1000px;text-align:center;top:1374.60px;font-size:13px;line-height:13px;font-weight:400;color:#3f3f3f;">$0</div>
<div class="t " style="left:779.30px;width:1000px;text-align:center;top:1374.60px;font-size:13px;line-height:13px;font-weight:400;color:#3f3f3f;">$5</div>
<div class="t " style="left:944.10px;width:1000px;text-align:center;top:1374.60px;font-size:13px;line-height:13px;font-weight:400;color:#3f3f3f;">$10</div>
<div class="t " style="left:1108.90px;width:1000px;text-align:center;top:1374.60px;font-size:13px;line-height:13px;font-weight:400;color:#3f3f3f;">$15</div>
<div class="t " style="left:1273.70px;width:1000px;text-align:center;top:1374.60px;font-size:13px;line-height:13px;font-weight:400;color:#3f3f3f;">$20</div>
<div class="t " style="left:1438.50px;width:1000px;text-align:center;top:1374.60px;font-size:13px;line-height:13px;font-weight:400;color:#3f3f3f;">$25</div>
<svg style="position:absolute;left:1000.00px;top:920.00px;" width="967" height="485" viewBox="0 0 967 485"><path d="M114.50 110.50V442.50" stroke="#dcdce0" stroke-width="1"/><path d="M114.50 442.50V448.50" stroke="#e0e0e0" stroke-width="1"/><path d="M279.50 110.50V442.50" stroke="#ececec" stroke-width="1"/><path d="M279.50 442.50V448.50" stroke="#e0e0e0" stroke-width="1"/><path d="M444.50 110.50V442.50" stroke="#ececec" stroke-width="1"/><path d="M444.50 442.50V448.50" stroke="#e0e0e0" stroke-width="1"/><path d="M608.50 110.50V442.50" stroke="#ececec" stroke-width="1"/><path d="M608.50 442.50V448.50" stroke="#e0e0e0" stroke-width="1"/><path d="M773.50 110.50V442.50" stroke="#ececec" stroke-width="1"/><path d="M773.50 442.50V448.50" stroke="#e0e0e0" stroke-width="1"/><path d="M938.50 110.50V442.50" stroke="#ececec" stroke-width="1"/><path d="M938.50 442.50V448.50" stroke="#e0e0e0" stroke-width="1"/><path d="M114.50 110.50H938.50" stroke="#ececec" stroke-width="1"/><path d="M114.50 442.50H938.50" stroke="#dcdce0" stroke-width="1"/><path d="M106.50 110.50H114.50M106.50 442.50H114.50" stroke="#e0e0e4" stroke-width="1" stroke-dasharray="5 3"/><rect x="115.00" y="157.30" width="720.91" height="238.30" fill="#1d4aff"/><rect x="811.20" y="263.20" width="47.3" height="25.6" rx="4.5" fill="#1d4aff" stroke="#fff" stroke-width="2"/></svg>
<div class="t m" style="left:1334.90px;width:1000px;text-align:center;top:1190.32px;font-size:12.5px;line-height:12.5px;font-weight:400;color:#fff;">$21.87</div>
<div class="t " style="right:897.00px;top:1189.37px;font-size:13.5px;line-height:13.5px;font-weight:400;color:#3f3f3f;">openai/gpt-5.4</div>
<div style="position:absolute;left:14.00px;top:1421.00px;width:640.00px;height:485.00px;background:#fff;border:1px solid #e5e6e0;border-radius:6px;box-sizing:border-box;"></div>
<div class="t " style="left:32.00px;top:1446.19px;font-size:11px;line-height:11px;font-weight:700;color:#3b3b3b;letter-spacing:0.57px;">TRENDS <span style="display:inline-block;width:5px;height:5px;border-radius:50%;background:#3b3b3b;vertical-align:1px;margin:0 1px"></span> LAST 7 DAYS</div>
<svg style="position:absolute;left:176.00px;top:1445.50px;" width="12" height="12" viewBox="0 0 12 12"><circle cx="6" cy="6" r="4.6" fill="none" stroke="#555" stroke-width="1.1"/><path d="M5.4 3.6V6.2L7 7.8" fill="none" stroke="#555" stroke-width="1"/></svg>
<div class="t " style="left:32.00px;top:1469.86px;font-size:16px;line-height:16px;font-weight:700;color:#151515;">Generation calls</div>
<svg style="position:absolute;left:471.00px;top:1443.00px;" width="20" height="16" viewBox="0 0 20 16"><rect x="1.2" y="1.8" width="16.4" height="12.4" rx="1.8" fill="none" stroke="#333" stroke-width="1.6"/><path d="M4 7.2H6.2M7.6 7.2H14.3M4 10.5H11.4M12.8 10.5H14.3" stroke="#333" stroke-width="1.4"/></svg>
<div class="t m" style="left:499.50px;top:1444.30px;font-size:15px;line-height:15px;font-weight:400;color:#1f1f1f;">Show details</div>
<div style="position:absolute;left:609.10px;top:1449.60px;width:3.20px;height:3.20px;background:#222;border-radius:50%;"></div>
<div style="position:absolute;left:616.40px;top:1449.60px;width:3.20px;height:3.20px;background:#222;border-radius:50%;"></div>
<div style="position:absolute;left:623.70px;top:1449.60px;width:3.20px;height:3.20px;background:#222;border-radius:50%;"></div>
<div style="position:absolute;left:15.00px;top:1508.00px;width:638.00px;height:1.00px;background:#e5e6e0;"></div>
<div class="t " style="right:1947.60px;top:1852.70px;font-size:13px;line-height:13px;font-weight:400;color:#3f3f3f;">0</div>
<div class="t " style="right:1947.60px;top:1816.28px;font-size:13px;line-height:13px;font-weight:400;color:#3f3f3f;">20</div>
<div class="t " style="right:1947.60px;top:1779.87px;font-size:13px;line-height:13px;font-weight:400;color:#3f3f3f;">40</div>
<div class="t " style="right:1947.60px;top:1743.46px;font-size:13px;line-height:13px;font-weight:400;color:#3f3f3f;">60</div>
<div class="t " style="right:1947.60px;top:1707.05px;font-size:13px;line-height:13px;font-weight:400;color:#3f3f3f;">80</div>
<div class="t " style="right:1947.60px;top:1670.64px;font-size:13px;line-height:13px;font-weight:400;color:#3f3f3f;">100</div>
<div class="t " style="right:1947.60px;top:1634.23px;font-size:13px;line-height:13px;font-weight:400;color:#3f3f3f;">120</div>
<div class="t " style="right:1947.60px;top:1597.82px;font-size:13px;line-height:13px;font-weight:400;color:#3f3f3f;">140</div>
<div class="t " style="right:1947.60px;top:1561.41px;font-size:13px;line-height:13px;font-weight:400;color:#3f3f3f;">160</div>
<div class="t " style="right:1947.60px;top:1525.00px;font-size:13px;line-height:13px;font-weight:400;color:#3f3f3f;">180</div>
<div class="t " style="left:-435.60px;width:1000px;text-align:center;top:1875.60px;font-size:13px;line-height:13px;font-weight:400;color:#3f3f3f;">April</div>
<div class="t " style="left:-356.00px;width:1000px;text-align:center;top:1875.60px;font-size:13px;line-height:13px;font-weight:400;color:#3f3f3f;">Apr 2</div>
<div class="t " style="left:-276.40px;width:1000px;text-align:center;top:1875.60px;font-size:13px;line-height:13px;font-weight:400;color:#3f3f3f;">Apr 3</div>
<div class="t " style="left:-196.80px;width:1000px;text-align:center;top:1875.60px;font-size:13px;line-height:13px;font-weight:400;color:#3f3f3f;">Apr 4</div>
<div class="t " style="left:-117.20px;width:1000px;text-align:center;top:1875.60px;font-size:13px;line-height:13px;font-weight:400;color:#3f3f3f;">Apr 5</div>
<div class="t " style="left:-37.60px;width:1000px;text-align:center;top:1875.60px;font-size:13px;line-height:13px;font-weight:400;color:#3f3f3f;">Apr 6</div>
<div class="t " style="left:42.00px;width:1000px;text-align:center;top:1875.60px;font-size:13px;line-height:13px;font-weight:400;color:#3f3f3f;">Apr 7</div>
<div class="t " style="left:121.60px;width:1000px;text-align:center;top:1875.60px;font-size:13px;line-height:13px;font-weight:400;color:#3f3f3f;">Apr 8</div>
<svg style="position:absolute;left:14.00px;top:1421.00px;" width="640" height="485" viewBox="0 0 640 485"><path d="M50.40 438.50H607.60" stroke="#dcdce0" stroke-width="1"/><path d="M42.40 438.50H50.40" stroke="#e0e0e4" stroke-width="1" stroke-dasharray="5 3"/><path d="M50.40 401.50H607.60" stroke="#ececec" stroke-width="1"/><path d="M42.40 401.50H50.40" stroke="#e0e0e4" stroke-width="1" stroke-dasharray="5 3"/><path d="M50.40 365.50H607.60" stroke="#ececec" stroke-width="1"/><path d="M42.40 365.50H50.40" stroke="#e0e0e4" stroke-width="1" stroke-dasharray="5 3"/><path d="M50.40 328.50H607.60" stroke="#ececec" stroke-width="1"/><path d="M42.40 328.50H50.40" stroke="#e0e0e4" stroke-width="1" stroke-dasharray="5 3"/><path d="M50.40 292.50H607.60" stroke="#ececec" stroke-width="1"/><path d="M42.40 292.50H50.40" stroke="#e0e0e4" stroke-width="1" stroke-dasharray="5 3"/><path d="M50.40 256.50H607.60" stroke="#ececec" stroke-width="1"/><path d="M42.40 256.50H50.40" stroke="#e0e0e4" stroke-width="1" stroke-dasharray="5 3"/><path d="M50.40 219.50H607.60" stroke="#ececec" stroke-width="1"/><path d="M42.40 219.50H50.40" stroke="#e0e0e4" stroke-width="1" stroke-dasharray="5 3"/><path d="M50.40 183.50H607.60" stroke="#ececec" stroke-width="1"/><path d="M42.40 183.50H50.40" stroke="#e0e0e4" stroke-width="1" stroke-dasharray="5 3"/><path d="M50.40 146.50H607.60" stroke="#ececec" stroke-width="1"/><path d="M42.40 146.50H50.40" stroke="#e0e0e4" stroke-width="1" stroke-dasharray="5 3"/><path d="M50.40 110.50H607.60" stroke="#ececec" stroke-width="1"/><path d="M42.40 110.50H50.40" stroke="#e0e0e4" stroke-width="1" stroke-dasharray="5 3"/><path d="M50.50 110.40V438.10" stroke="#dcdce0" stroke-width="1"/><path d="M50.50 438.10V448.10" stroke="#e0e0e4" stroke-width="1" stroke-dasharray="4 2"/><path d="M130.50 438.10V448.10" stroke="#e0e0e4" stroke-width="1" stroke-dasharray="4 2"/><path d="M209.50 438.10V448.10" stroke="#e0e0e4" stroke-width="1" stroke-dasharray="4 2"/><path d="M289.50 438.10V448.10" stroke="#e0e0e4" stroke-width="1" stroke-dasharray="4 2"/><path d="M368.50 438.10V448.10" stroke="#e0e0e4" stroke-width="1" stroke-dasharray="4 2"/><path d="M448.50 438.10V448.10" stroke="#e0e0e4" stroke-width="1" stroke-dasharray="4 2"/><path d="M528.50 438.10V448.10" stroke="#e0e0e4" stroke-width="1" stroke-dasharray="4 2"/><path d="M607.50 438.10V448.10" stroke="#e0e0e4" stroke-width="1" stroke-dasharray="4 2"/><path d="M50.40 177.76 L130.00 248.76 L209.60 128.61 L289.20 296.10 L368.80 438.10 L448.40 401.69 L528.00 144.99" fill="none" stroke="#1d4aff" stroke-width="2" stroke-linejoin="round"/><path d="M528.00 144.99 L607.60 438.10" fill="none" stroke="#1d4aff" stroke-width="2" stroke-dasharray="10 10"/></svg>
<div style="position:absolute;left:670.00px;top:1421.00px;width:641.00px;height:485.00px;background:#fff;border:1px solid #e5e6e0;border-radius:6px;box-sizing:border-box;"></div>
<div class="t " style="left:688.00px;top:1446.19px;font-size:11px;line-height:11px;font-weight:700;color:#3b3b3b;letter-spacing:0.57px;">TRENDS <span style="display:inline-block;width:5px;height:5px;border-radius:50%;background:#3b3b3b;vertical-align:1px;margin:0 1px"></span> LAST 7 DAYS</div>
<svg style="position:absolute;left:832.00px;top:1445.50px;" width="12" height="12" viewBox="0 0 12 12"><circle cx="6" cy="6" r="4.6" fill="none" stroke="#555" stroke-width="1.1"/><path d="M5.4 3.6V6.2L7 7.8" fill="none" stroke="#555" stroke-width="1"/></svg>
<div class="t " style="left:688.00px;top:1469.86px;font-size:16px;line-height:16px;font-weight:700;color:#151515;">AI Errors</div>
<div class="t m" style="left:688.00px;top:1495.30px;font-size:15px;line-height:15px;font-weight:400;color:#151515;letter-spacing:0.09px;">Failed AI generation calls</div>
<svg style="position:absolute;left:1128.00px;top:1443.00px;" width="20" height="16" viewBox="0 0 20 16"><rect x="1.2" y="1.8" width="16.4" height="12.4" rx="1.8" fill="none" stroke="#333" stroke-width="1.6"/><path d="M4 7.2H6.2M7.6 7.2H14.3M4 10.5H11.4M12.8 10.5H14.3" stroke="#333" stroke-width="1.4"/></svg>
<div class="t m" style="left:1156.50px;top:1444.30px;font-size:15px;line-height:15px;font-weight:400;color:#1f1f1f;">Show details</div>
<div style="position:absolute;left:1266.10px;top:1449.60px;width:3.20px;height:3.20px;background:#222;border-radius:50%;"></div>
<div style="position:absolute;left:1273.40px;top:1449.60px;width:3.20px;height:3.20px;background:#222;border-radius:50%;"></div>
<div style="position:absolute;left:1280.70px;top:1449.60px;width:3.20px;height:3.20px;background:#222;border-radius:50%;"></div>
<div style="position:absolute;left:671.00px;top:1530.00px;width:639.00px;height:1.00px;background:#e5e6e0;"></div>
<div class="t " style="right:1295.00px;top:1852.70px;font-size:13px;line-height:13px;font-weight:400;color:#3f3f3f;">0</div>
<div class="t " style="right:1295.00px;top:1814.60px;font-size:13px;line-height:13px;font-weight:400;color:#3f3f3f;">0.5</div>
<div class="t " style="right:1295.00px;top:1776.50px;font-size:13px;line-height:13px;font-weight:400;color:#3f3f3f;">1</div>
<div class="t " style="right:1295.00px;top:1738.40px;font-size:13px;line-height:13px;font-weight:400;color:#3f3f3f;">1.5</div>
<div class="t " style="right:1295.00px;top:1700.30px;font-size:13px;line-height:13px;font-weight:400;color:#3f3f3f;">2</div>
<div class="t " style="right:1295.00px;top:1662.20px;font-size:13px;line-height:13px;font-weight:400;color:#3f3f3f;">2.5</div>
<div class="t " style="right:1295.00px;top:1624.10px;font-size:13px;line-height:13px;font-weight:400;color:#3f3f3f;">3</div>
<div class="t " style="right:1295.00px;top:1586.00px;font-size:13px;line-height:13px;font-weight:400;color:#3f3f3f;">3.5</div>
<div class="t " style="right:1295.00px;top:1547.90px;font-size:13px;line-height:13px;font-weight:400;color:#3f3f3f;">4</div>
<div class="t " style="left:217.00px;width:1000px;text-align:center;top:1875.60px;font-size:13px;line-height:13px;font-weight:400;color:#3f3f3f;">April</div>
<div class="t " style="left:297.21px;width:1000px;text-align:center;top:1875.60px;font-size:13px;line-height:13px;font-weight:400;color:#3f3f3f;">Apr 2</div>
<div class="t " style="left:377.43px;width:1000px;text-align:center;top:1875.60px;font-size:13px;line-height:13px;font-weight:400;color:#3f3f3f;">Apr 3</div>
<div class="t " style="left:457.64px;width:1000px;text-align:center;top:1875.60px;font-size:13px;line-height:13px;font-weight:400;color:#3f3f3f;">Apr 4</div>
<div class="t " style="left:537.86px;width:1000px;text-align:center;top:1875.60px;font-size:13px;line-height:13px;font-weight:400;color:#3f3f3f;">Apr 5</div>
<div class="t " style="left:618.07px;width:1000px;text-align:center;top:1875.60px;font-size:13px;line-height:13px;font-weight:400;color:#3f3f3f;">Apr 6</div>
<div class="t " style="left:698.29px;width:1000px;text-align:center;top:1875.60px;font-size:13px;line-height:13px;font-weight:400;color:#3f3f3f;">Apr 7</div>
<div class="t " style="left:778.50px;width:1000px;text-align:center;top:1875.60px;font-size:13px;line-height:13px;font-weight:400;color:#3f3f3f;">Apr 8</div>
<svg style="position:absolute;left:670.00px;top:1421.00px;" width="641" height="485" viewBox="0 0 641 485"><path d="M47.00 438.50H608.50" stroke="#dcdce0" stroke-width="1"/><path d="M39.00 438.50H47.00" stroke="#e0e0e4" stroke-width="1" stroke-dasharray="5 3"/><path d="M47.00 399.50H608.50" stroke="#ececec" stroke-width="1"/><path d="M39.00 399.50H47.00" stroke="#e0e0e4" stroke-width="1" stroke-dasharray="5 3"/><path d="M47.00 361.50H608.50" stroke="#ececec" stroke-width="1"/><path d="M39.00 361.50H47.00" stroke="#e0e0e4" stroke-width="1" stroke-dasharray="5 3"/><path d="M47.00 323.50H608.50" stroke="#ececec" stroke-width="1"/><path d="M39.00 323.50H47.00" stroke="#e0e0e4" stroke-width="1" stroke-dasharray="5 3"/><path d="M47.00 285.50H608.50" stroke="#ececec" stroke-width="1"/><path d="M39.00 285.50H47.00" stroke="#e0e0e4" stroke-width="1" stroke-dasharray="5 3"/><path d="M47.00 247.50H608.50" stroke="#ececec" stroke-width="1"/><path d="M39.00 247.50H47.00" stroke="#e0e0e4" stroke-width="1" stroke-dasharray="5 3"/><path d="M47.00 209.50H608.50" stroke="#ececec" stroke-width="1"/><path d="M39.00 209.50H47.00" stroke="#e0e0e4" stroke-width="1" stroke-dasharray="5 3"/><path d="M47.00 171.50H608.50" stroke="#ececec" stroke-width="1"/><path d="M39.00 171.50H47.00" stroke="#e0e0e4" stroke-width="1" stroke-dasharray="5 3"/><path d="M47.00 133.50H608.50" stroke="#ececec" stroke-width="1"/><path d="M39.00 133.50H47.00" stroke="#e0e0e4" stroke-width="1" stroke-dasharray="5 3"/><path d="M46.50 133.30V438.10" stroke="#dcdce0" stroke-width="1"/><path d="M46.50 438.10V448.10" stroke="#e0e0e4" stroke-width="1" stroke-dasharray="4 2"/><path d="M127.50 438.10V448.10" stroke="#e0e0e4" stroke-width="1" stroke-dasharray="4 2"/><path d="M207.50 438.10V448.10" stroke="#e0e0e4" stroke-width="1" stroke-dasharray="4 2"/><path d="M287.50 438.10V448.10" stroke="#e0e0e4" stroke-width="1" stroke-dasharray="4 2"/><path d="M367.50 438.10V448.10" stroke="#e0e0e4" stroke-width="1" stroke-dasharray="4 2"/><path d="M448.50 438.10V448.10" stroke="#e0e0e4" stroke-width="1" stroke-dasharray="4 2"/><path d="M528.50 438.10V448.10" stroke="#e0e0e4" stroke-width="1" stroke-dasharray="4 2"/><path d="M608.50 438.10V448.10" stroke="#e0e0e4" stroke-width="1" stroke-dasharray="4 2"/><path d="M47.00 438.10 L127.21 133.30 L207.43 438.10 L287.64 438.10 L367.86 438.10 L448.07 438.10 L528.29 361.90" fill="none" stroke="#1d4aff" stroke-width="2" stroke-linejoin="round"/><path d="M528.29 361.90 L608.50 438.10" fill="none" stroke="#1d4aff" stroke-width="2" stroke-dasharray="10 10"/></svg>
<div style="position:absolute;left:1327.00px;top:1421.00px;width:640.00px;height:485.00px;background:#fff;border:1px solid #e5e6e0;border-radius:6px;box-sizing:border-box;"></div>
<div class="t " style="left:1345.00px;top:1446.19px;font-size:11px;line-height:11px;font-weight:700;color:#3b3b3b;letter-spacing:0.57px;">TRENDS <span style="display:inline-block;width:5px;height:5px;border-radius:50%;background:#3b3b3b;vertical-align:1px;margin:0 1px"></span> LAST 7 DAYS</div>
<svg style="position:absolute;left:1489.00px;top:1445.50px;" width="12" height="12" viewBox="0 0 12 12"><circle cx="6" cy="6" r="4.6" fill="none" stroke="#555" stroke-width="1.1"/><path d="M5.4 3.6V6.2L7 7.8" fill="none" stroke="#555" stroke-width="1"/></svg>
<div class="t " style="left:1345.00px;top:1469.86px;font-size:16px;line-height:16px;font-weight:700;color:#151515;">Generation latency by model (median)</div>
<svg style="position:absolute;left:1784.00px;top:1443.00px;" width="20" height="16" viewBox="0 0 20 16"><rect x="1.2" y="1.8" width="16.4" height="12.4" rx="1.8" fill="none" stroke="#333" stroke-width="1.6"/><path d="M4 7.2H6.2M7.6 7.2H14.3M4 10.5H11.4M12.8 10.5H14.3" stroke="#333" stroke-width="1.4"/></svg>
<div class="t m" style="left:1812.50px;top:1444.30px;font-size:15px;line-height:15px;font-weight:400;color:#1f1f1f;">Show details</div>
<div style="position:absolute;left:1922.10px;top:1449.60px;width:3.20px;height:3.20px;background:#222;border-radius:50%;"></div>
<div style="position:absolute;left:1929.40px;top:1449.60px;width:3.20px;height:3.20px;background:#222;border-radius:50%;"></div>
<div style="position:absolute;left:1936.70px;top:1449.60px;width:3.20px;height:3.20px;background:#222;border-radius:50%;"></div>
<div style="position:absolute;left:1328.00px;top:1508.00px;width:638.00px;height:1.00px;background:#e5e6e0;"></div>
<div class="t " style="right:627.60px;top:1852.70px;font-size:13px;line-height:13px;font-weight:400;color:#3f3f3f;">0 s</div>
<div class="t " style="right:627.60px;top:1819.93px;font-size:13px;line-height:13px;font-weight:400;color:#3f3f3f;">0.5 s</div>
<div class="t " style="right:627.60px;top:1787.16px;font-size:13px;line-height:13px;font-weight:400;color:#3f3f3f;">1 s</div>
<div class="t " style="right:627.60px;top:1754.39px;font-size:13px;line-height:13px;font-weight:400;color:#3f3f3f;">1.5 s</div>
<div class="t " style="right:627.60px;top:1721.62px;font-size:13px;line-height:13px;font-weight:400;color:#3f3f3f;">2 s</div>
<div class="t " style="right:627.60px;top:1688.85px;font-size:13px;line-height:13px;font-weight:400;color:#3f3f3f;">2.5 s</div>
<div class="t " style="right:627.60px;top:1656.08px;font-size:13px;line-height:13px;font-weight:400;color:#3f3f3f;">3 s</div>
<div class="t " style="right:627.60px;top:1623.31px;font-size:13px;line-height:13px;font-weight:400;color:#3f3f3f;">3.5 s</div>
<div class="t " style="right:627.60px;top:1590.54px;font-size:13px;line-height:13px;font-weight:400;color:#3f3f3f;">4 s</div>
<div class="t " style="right:627.60px;top:1557.77px;font-size:13px;line-height:13px;font-weight:400;color:#3f3f3f;">4.5 s</div>
<div class="t " style="right:627.60px;top:1525.00px;font-size:13px;line-height:13px;font-weight:400;color:#3f3f3f;">5 s</div>
<div class="t " style="left:884.40px;width:1000px;text-align:center;top:1875.60px;font-size:13px;line-height:13px;font-weight:400;color:#3f3f3f;">April</div>
<div class="t " style="left:962.94px;width:1000px;text-align:center;top:1875.60px;font-size:13px;line-height:13px;font-weight:400;color:#3f3f3f;">Apr 2</div>
<div class="t " style="left:1041.49px;width:1000px;text-align:center;top:1875.60px;font-size:13px;line-height:13px;font-weight:400;color:#3f3f3f;">Apr 3</div>
<div class="t " style="left:1120.03px;width:1000px;text-align:center;top:1875.60px;font-size:13px;line-height:13px;font-weight:400;color:#3f3f3f;">Apr 4</div>
<div class="t " style="left:1198.57px;width:1000px;text-align:center;top:1875.60px;font-size:13px;line-height:13px;font-weight:400;color:#3f3f3f;">Apr 5</div>
<div class="t " style="left:1277.11px;width:1000px;text-align:center;top:1875.60px;font-size:13px;line-height:13px;font-weight:400;color:#3f3f3f;">Apr 6</div>
<div class="t " style="left:1355.66px;width:1000px;text-align:center;top:1875.60px;font-size:13px;line-height:13px;font-weight:400;color:#3f3f3f;">Apr 7</div>
<div class="t " style="left:1434.20px;width:1000px;text-align:center;top:1875.60px;font-size:13px;line-height:13px;font-weight:400;color:#3f3f3f;">Apr 8</div>
<svg style="position:absolute;left:1327.00px;top:1421.00px;" width="640" height="485" viewBox="0 0 640 485"><path d="M57.40 438.50H607.20" stroke="#dcdce0" stroke-width="1"/><path d="M49.40 438.50H57.40" stroke="#e0e0e4" stroke-width="1" stroke-dasharray="5 3"/><path d="M57.40 405.50H607.20" stroke="#ececec" stroke-width="1"/><path d="M49.40 405.50H57.40" stroke="#e0e0e4" stroke-width="1" stroke-dasharray="5 3"/><path d="M57.40 372.50H607.20" stroke="#ececec" stroke-width="1"/><path d="M49.40 372.50H57.40" stroke="#e0e0e4" stroke-width="1" stroke-dasharray="5 3"/><path d="M57.40 339.50H607.20" stroke="#ececec" stroke-width="1"/><path d="M49.40 339.50H57.40" stroke="#e0e0e4" stroke-width="1" stroke-dasharray="5 3"/><path d="M57.40 307.50H607.20" stroke="#ececec" stroke-width="1"/><path d="M49.40 307.50H57.40" stroke="#e0e0e4" stroke-width="1" stroke-dasharray="5 3"/><path d="M57.40 274.50H607.20" stroke="#ececec" stroke-width="1"/><path d="M49.40 274.50H57.40" stroke="#e0e0e4" stroke-width="1" stroke-dasharray="5 3"/><path d="M57.40 241.50H607.20" stroke="#ececec" stroke-width="1"/><path d="M49.40 241.50H57.40" stroke="#e0e0e4" stroke-width="1" stroke-dasharray="5 3"/><path d="M57.40 208.50H607.20" stroke="#ececec" stroke-width="1"/><path d="M49.40 208.50H57.40" stroke="#e0e0e4" stroke-width="1" stroke-dasharray="5 3"/><path d="M57.40 175.50H607.20" stroke="#ececec" stroke-width="1"/><path d="M49.40 175.50H57.40" stroke="#e0e0e4" stroke-width="1" stroke-dasharray="5 3"/><path d="M57.40 143.50H607.20" stroke="#ececec" stroke-width="1"/><path d="M49.40 143.50H57.40" stroke="#e0e0e4" stroke-width="1" stroke-dasharray="5 3"/><path d="M57.40 110.50H607.20" stroke="#ececec" stroke-width="1"/><path d="M49.40 110.50H57.40" stroke="#e0e0e4" stroke-width="1" stroke-dasharray="5 3"/><path d="M57.50 110.40V438.10" stroke="#dcdce0" stroke-width="1"/><path d="M57.50 438.10V448.10" stroke="#e0e0e4" stroke-width="1" stroke-dasharray="4 2"/><path d="M135.50 438.10V448.10" stroke="#e0e0e4" stroke-width="1" stroke-dasharray="4 2"/><path d="M214.50 438.10V448.10" stroke="#e0e0e4" stroke-width="1" stroke-dasharray="4 2"/><path d="M293.50 438.10V448.10" stroke="#e0e0e4" stroke-width="1" stroke-dasharray="4 2"/><path d="M371.50 438.10V448.10" stroke="#e0e0e4" stroke-width="1" stroke-dasharray="4 2"/><path d="M450.50 438.10V448.10" stroke="#e0e0e4" stroke-width="1" stroke-dasharray="4 2"/><path d="M528.50 438.10V448.10" stroke="#e0e0e4" stroke-width="1" stroke-dasharray="4 2"/><path d="M607.50 438.10V448.10" stroke="#e0e0e4" stroke-width="1" stroke-dasharray="4 2"/><path d="M57.40 314.23 L135.94 325.37 L214.49 333.24 L293.03 339.13 L371.57 438.10 L450.11 141.86 L528.66 326.68" fill="none" stroke="#1d4aff" stroke-width="2" stroke-linejoin="round"/><path d="M528.66 326.68 L607.20 438.10" fill="none" stroke="#1d4aff" stroke-width="2" stroke-dasharray="10 10"/></svg>
<div style="position:absolute;left:14.00px;top:1922.00px;width:640.00px;height:485.00px;background:#fff;border:1px solid #e5e6e0;border-radius:6px;box-sizing:border-box;"></div>
<div class="t " style="left:32.00px;top:1947.19px;font-size:11px;line-height:11px;font-weight:700;color:#3b3b3b;letter-spacing:0.57px;">TRENDS <span style="display:inline-block;width:5px;height:5px;border-radius:50%;background:#3b3b3b;vertical-align:1px;margin:0 1px"></span> LAST 7 DAYS</div>
<svg style="position:absolute;left:176.00px;top:1946.50px;" width="12" height="12" viewBox="0 0 12 12"><circle cx="6" cy="6" r="4.6" fill="none" stroke="#555" stroke-width="1.1"/><path d="M5.4 3.6V6.2L7 7.8" fill="none" stroke="#555" stroke-width="1"/></svg>
<div class="t " style="left:32.00px;top:1970.86px;font-size:16px;line-height:16px;font-weight:700;color:#151515;">Generations by HTTP status</div>
<svg style="position:absolute;left:471.00px;top:1944.00px;" width="20" height="16" viewBox="0 0 20 16"><rect x="1.2" y="1.8" width="16.4" height="12.4" rx="1.8" fill="none" stroke="#333" stroke-width="1.6"/><path d="M4 7.2H6.2M7.6 7.2H14.3M4 10.5H11.4M12.8 10.5H14.3" stroke="#333" stroke-width="1.4"/></svg>
<div class="t m" style="left:499.50px;top:1945.30px;font-size:15px;line-height:15px;font-weight:400;color:#1f1f1f;">Show details</div>
<div style="position:absolute;left:609.10px;top:1950.60px;width:3.20px;height:3.20px;background:#222;border-radius:50%;"></div>
<div style="position:absolute;left:616.40px;top:1950.60px;width:3.20px;height:3.20px;background:#222;border-radius:50%;"></div>
<div style="position:absolute;left:623.70px;top:1950.60px;width:3.20px;height:3.20px;background:#222;border-radius:50%;"></div>
<div style="position:absolute;left:15.00px;top:2009.00px;width:638.00px;height:1.00px;background:#e5e6e0;"></div>
<div style="position:absolute;left:0.00px;top:1935.00px;width:1996.00px;height:55.00px;background:linear-gradient(to bottom, rgba(0,0,0,0), rgba(0,0,0,0.02) 50%, rgba(0,0,0,0.065));-webkit-mask-image:linear-gradient(to right, #000 0%, #000 65%, transparent 88%);mask-image:linear-gradient(to right, #000 0%, #000 65%, transparent 88%);"></div>
</body></html>
